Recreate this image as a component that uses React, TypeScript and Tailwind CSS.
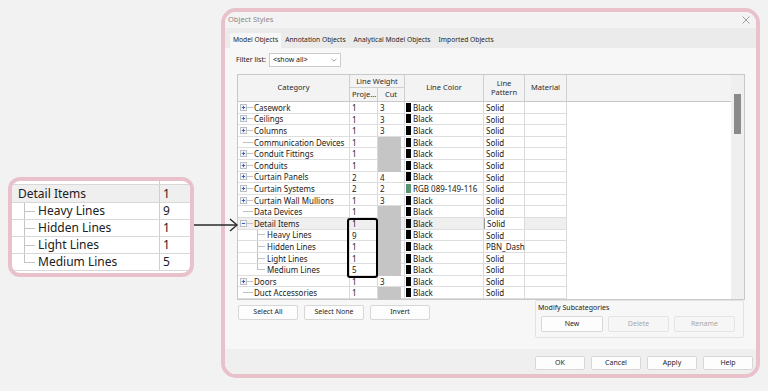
import React from "react";

type Row = {
  name: string;
  kind: "plus" | "minus" | "leaf" | "child" | "lastChild";
  proj: string;
  cut?: string;
  color?: string;
  swatch?: string;
  pattern?: string;
  selected?: boolean;
};

const ROWS: Row[] = [
  { name: "Casework", kind: "plus", proj: "1", cut: "3" },
  { name: "Ceilings", kind: "plus", proj: "1", cut: "3" },
  { name: "Columns", kind: "plus", proj: "1", cut: "3" },
  { name: "Communication Devices", kind: "leaf", proj: "1" },
  { name: "Conduit Fittings", kind: "plus", proj: "1" },
  { name: "Conduits", kind: "plus", proj: "1" },
  { name: "Curtain Panels", kind: "plus", proj: "2", cut: "4" },
  { name: "Curtain Systems", kind: "plus", proj: "2", cut: "2", color: "RGB 089-149-116", swatch: "#599574" },
  { name: "Curtain Wall Mullions", kind: "plus", proj: "1", cut: "3" },
  { name: "Data Devices", kind: "leaf", proj: "1" },
  { name: "Detail Items", kind: "minus", proj: "1", selected: true },
  { name: "Heavy Lines", kind: "child", proj: "9" },
  { name: "Hidden Lines", kind: "child", proj: "1", pattern: "PBN_Dash" },
  { name: "Light Lines", kind: "child", proj: "1" },
  { name: "Medium Lines", kind: "lastChild", proj: "5" },
  { name: "Doors", kind: "plus", proj: "1", cut: "3" },
  { name: "Duct Accessories", kind: "leaf", proj: "1" },
];

const CALLOUT = [
  { name: "Heavy Lines", value: "9" },
  { name: "Hidden Lines", value: "1" },
  { name: "Light Lines", value: "1" },
  { name: "Medium Lines", value: "5" },
];

const Expander: React.FC<{ open?: boolean }> = ({ open }) => (
  <svg width="7" height="7" viewBox="0 0 7 7" className="shrink-0">
    <rect x="0.5" y="0.5" width="6" height="6" fill="#f4f6fa" stroke="#b9bec8" />
    <line x1="1.8" y1="3.5" x2="5.2" y2="3.5" stroke="#3b63b8" strokeWidth="1" />
    {!open && <line x1="3.5" y1="1.8" x2="3.5" y2="5.2" stroke="#3b63b8" strokeWidth="1" />}
  </svg>
);

const Btn: React.FC<{ label: string; w: string; disabled?: boolean }> = ({ label, w, disabled }) => (
  <div
    className={`${w} h-full flex items-center justify-center rounded-[2px] border text-[7px] ${
      disabled ? "bg-[#f6f6f6] border-[#e4e4e4] text-[#a8a8a8]" : "bg-[#fdfdfd] border-[#d7d7d7] text-[#1e1e1e]"
    }`}
  >
    {label}
  </div>
);

const CategoryCell: React.FC<{ row: Row }> = ({ row }) => {
  const child = row.kind === "child" || row.kind === "lastChild";
  return (
    <div className="w-[112px] h-full border-r border-[#dadada] flex items-center relative">
      {row.kind === "plus" || row.kind === "minus" ? (
        <div className="flex items-center pl-[2px]">
          <Expander open={row.kind === "minus"} />
          <div className="w-[6px] border-t border-[#c2c2c2]" />
        </div>
      ) : child ? (
        <div className="flex items-center pl-[19px] h-full relative">
          <div
            className={`absolute left-[19px] top-0 border-l border-[#c2c2c2] ${
              row.kind === "lastChild" ? "h-1/2" : "h-full"
            }`}
          />
          <div className="w-[8px] border-t border-[#c2c2c2]" />
        </div>
      ) : (
        <div className="pl-[5px] flex items-center">
          <div className="w-[10px] border-t border-[#c2c2c2]" />
        </div>
      )}
      <span className={`${child ? "pl-[2px]" : "pl-[1px]"} whitespace-nowrap`}>{row.name}</span>
    </div>
  );
};

const TableRow: React.FC<{ row: Row }> = ({ row }) => {
  const gray = !row.cut;
  return (
    <div className={`flex h-[11.6px] leading-[11px] ${row.selected ? "bg-[#efefef]" : "bg-white"}`}>
      <div className="flex w-[329px] border-b border-[#dedede] h-full">
        <CategoryCell row={row} />
        <div className="w-[28px] h-full border-r border-[#dadada] pl-[2px]">{row.proj}</div>
        <div className="w-[27px] h-full border-r border-[#dadada] pr-[3px]">
          {gray ? <div className="h-[calc(100%+1px)] bg-[#c5c5c5]" /> : <div className="pl-[2px]">{row.cut}</div>}
        </div>
        <div className="w-[79px] h-full border-r border-[#dadada] flex items-center pl-[1px]">
          <div className="w-[5px] h-[9px] shrink-0" style={{ background: row.swatch ?? "#000" }} />
          <span className="pl-[2px] whitespace-nowrap">{row.color ?? "Black"}</span>
        </div>
        <div
          className={`w-[41px] h-full border-r border-[#dadada] pl-[2px] ${
            row.selected ? "bg-white border-l border-l-[#9a9a9a]" : ""
          }`}
        >
          {row.pattern ?? "Solid"}
        </div>
        <div className="w-[42px] h-full border-r border-[#dadada]" />
      </div>
      <div className="flex-1 bg-white" />
    </div>
  );
};

export default function App() {
  return (
    <div className="relative w-[768px] h-[391px] overflow-hidden bg-[#f2f2f2] flex items-start font-['Noto_Sans',sans-serif] text-[#202020]">
      {/* callout */}
      <div className="ml-[8px] mt-[177px] w-[186px] h-[100px] border-4 border-[#e8c1cb] rounded-[12px] overflow-hidden bg-white text-[12px]">
        <div className="flex h-[4px] border-b border-[#d8d8d8]">
          <div className="w-[148px] border-r border-[#cfcfcf]" />
        </div>
        <div className="flex h-[18px] bg-[#efefef] border-b border-[#d8d8d8] leading-[17px]">
          <div className="w-[148px] border-r border-[#cfcfcf] pl-[6px]">Detail Items</div>
          <div className="pl-[3px]">1</div>
        </div>
        {CALLOUT.map((r, i) => (
          <div key={r.name} className="flex h-[17px] border-b border-[#d8d8d8] leading-[16px]">
            <div className="w-[148px] border-r border-[#cfcfcf] flex items-center relative">
              <div
                className={`absolute left-[12px] top-0 border-l border-[#c4c4c4] ${
                  i === CALLOUT.length - 1 ? "h-1/2" : "h-full"
                }`}
              />
              <div className="ml-[12px] w-[11px] border-t border-[#c4c4c4]" />
              <span className="pl-[3px]">{r.name}</span>
            </div>
            <div className="pl-[3px]">{r.value}</div>
          </div>
        ))}
      </div>

      {/* dialog */}
      <div className="ml-[27px] mt-[8px] w-[539px] h-[370px] border-4 border-[#e8c1cb] rounded-[15px] overflow-hidden flex flex-col bg-[#f7f7f7]">
        <div className="h-[16px] bg-[#f3f3f3] flex items-center justify-between pl-[3px] pr-[6px] text-[7.5px] text-[#8a8a8a]">
          <span>Object Styles</span>
          <svg width="8" height="8" viewBox="0 0 8 8">
            <path d="M0.5 0.5 L7.5 7.5 M7.5 0.5 L0.5 7.5" stroke="#8a8a8a" strokeWidth="0.8" />
          </svg>
        </div>
        <div className="h-[20px] bg-[#ebebeb] flex items-end pl-[5px] text-[6.7px] text-[#1e1e1e]">
          <div className="h-[15px] bg-[#f7f7f7] px-[3px] flex items-center">Model Objects</div>
          <div className="h-[15px] px-[4px] flex items-center">Annotation Objects</div>
          <div className="h-[15px] px-[4px] flex items-center">Analytical Model Objects</div>
          <div className="h-[15px] px-[4px] flex items-center">Imported Objects</div>
        </div>

        <div className="h-[301px] px-[12px] flex flex-col">
          <div className="mt-[5px] h-[14px] flex items-center text-[7px]">
            <span className="w-[33px] -ml-[1px]">Filter list:</span>
            <div className="w-[72px] h-full bg-white border border-[#cccccc] flex items-center justify-between pl-[3px] pr-[3px]">
              <span>&lt;show all&gt;</span>
              <svg width="6" height="4" viewBox="0 0 6 4">
                <path d="M0.5 0.8 L3 3.2 L5.5 0.8" fill="none" stroke="#777" strokeWidth="0.7" />
              </svg>
            </div>
          </div>

          {/* table */}
          <div className="relative mt-[7px] w-[508px] h-[226px] border border-[#c8c8c8] flex bg-white overflow-hidden text-[8px]">
            <div className="flex-1 flex flex-col">
              <div className="flex h-[27px] bg-[#f3f3f3] border-b border-[#c8c8c8] text-[7.5px] text-[#2a2a2a] leading-[9px]">
                <div className="w-[112px] border-r border-[#cfcfcf] flex items-center justify-center">Category</div>
                <div className="w-[55px] border-r border-[#cfcfcf] flex flex-col">
                  <div className="h-[13px] border-b border-[#cfcfcf] flex items-center justify-center">Line Weight</div>
                  <div className="flex flex-1">
                    <div className="w-[28px] border-r border-[#cfcfcf] flex items-center pl-[2px]">Proje...</div>
                    <div className="flex-1 flex items-center justify-center">Cut</div>
                  </div>
                </div>
                <div className="w-[79px] border-r border-[#cfcfcf] flex items-center justify-center">Line Color</div>
                <div className="w-[41px] border-r border-[#cfcfcf] flex items-center justify-center text-center">
                  Line
                  <br />
                  Pattern
                </div>
                <div className="w-[42px] border-r border-[#cfcfcf] flex items-center justify-center">Material</div>
                <div className="flex-1" />
              </div>
              {ROWS.map((r) => (
                <TableRow key={r.name} row={r} />
              ))}
            </div>
            <div className="w-[13px] h-full bg-[#efefef] pl-[3px]">
              <div className="mt-[19px] w-[7px] h-[40px] bg-[#8a8a8a]" />
            </div>
            {/* highlight box */}
            <div className="absolute left-[109px] top-[143px] w-[31px] h-[60px] border-2 border-black rounded-[3px]" />
          </div>

          <div className="flex justify-between">
            <div className="mt-[5px] h-[15px] flex gap-[6px] pl-[1px]">
              <Btn label="Select All" w="w-[60px]" />
              <Btn label="Select None" w="w-[60px]" />
              <Btn label="Invert" w="w-[60px]" />
            </div>
            <div className="w-[209px] h-[38px] border border-[#e2e2e2] rounded-[2px] px-[5px] flex flex-col">
              <div className="h-[15px] flex items-center text-[7px] -ml-[3px]">Modify Subcategories</div>
              <div className="h-[16px] flex gap-[5px]">
                <Btn label="New" w="w-[62px]" />
                <Btn label="Delete" w="w-[61px]" disabled />
                <Btn label="Rename" w="w-[61px]" disabled />
              </div>
            </div>
          </div>
        </div>

        <div className="h-[25px] bg-[#efefef] pt-[7px] pr-[3px] flex justify-end">
          <div className="h-[14px] flex gap-[6px]">
            <Btn label="OK" w="w-[50px]" />
            <Btn label="Cancel" w="w-[50px]" />
            <Btn label="Apply" w="w-[50px]" />
            <Btn label="Help" w="w-[50px]" />
          </div>
        </div>
      </div>

      {/* arrow */}
      <svg className="absolute left-[193px] top-[218px]" width="46" height="14" viewBox="0 0 46 14">
        <path d="M1 7 H44" stroke="#2a2a2a" strokeWidth="1.4" />
        <path d="M37 1 L44 7 L37 13" fill="none" stroke="#2a2a2a" strokeWidth="1.4" />
      </svg>
    </div>
  );
}
